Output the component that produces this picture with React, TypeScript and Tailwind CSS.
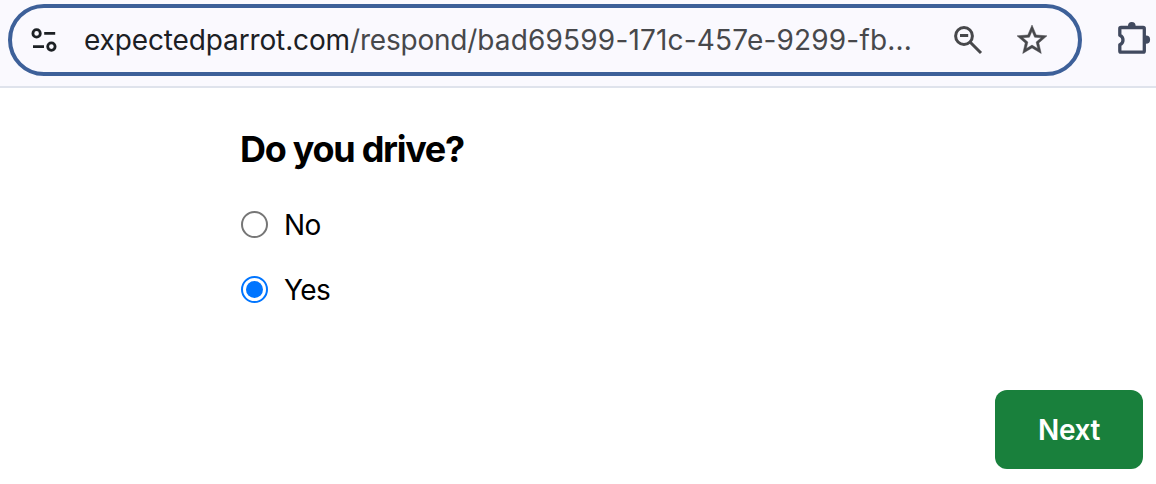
import { useState } from "react";

const options = ["No", "Yes"];

function TuneIcon() {
    return (
        <svg width="28" height="26" viewBox="0 0 28 26" fill="none" stroke="#1c2024" strokeWidth="2.8">
            <circle cx="6.6" cy="6.4" r="3.7" />
            <path d="M14.2 6.4H25.2M3 19.6H14" />
            <circle cx="21.4" cy="19.6" r="3.7" />
        </svg>
    );
}

function ZoomOutIcon() {
    return (
        <svg width="30" height="30" viewBox="0 0 30 30" fill="none" stroke="#47484b" strokeWidth="3">
            <circle cx="11" cy="11" r="8.4" />
            <path d="M17 17L28 28M7 10.6H15.2" />
        </svg>
    );
}

function StarIcon() {
    return (
        <svg width="36" height="36" viewBox="0 0 24 24" fill="#47484b" stroke="#47484b" strokeWidth="0.3">
            <path d="M22 9.24l-7.19-.62L12 2 9.19 8.63 2 9.24l5.46 4.73L5.82 21 12 17.27 18.18 21l-1.63-7.03L22 9.24zM12 15.4l-3.76 2.27 1-4.28-3.32-2.88 4.38-.38L12 6.1l1.71 4.04 4.38.38-3.32 2.88 1 4.28L12 15.4z" />
        </svg>
    );
}

function ExtensionIcon() {
    return (
        <svg width="36" height="36" viewBox="0 0 36 36" fill="none">
            <path
                d="M5 8.5H27.1Q28.3 8.5 28.3 9.7V32Q28.3 33.2 27.1 33.2H5Q3.8 33.2 3.8 32V25.8A5.2 5.2 0 0 0 3.8 16.2V9.7Q3.8 8.5 5 8.5Z"
                stroke="#414a5f"
                strokeWidth="3.3"
                strokeLinejoin="round"
            />
            <path d="M12 8V6.8a3.8 3.8 0 0 1 7.6 0V8ZM29 16.6h1a4.1 4.1 0 0 1 0 8.2H29Z" fill="#414a5f" />
        </svg>
    );
}

export default function App() {
    const [answer, setAnswer] = useState("Yes");

    return (
        <div className="h-[484px] w-[1156px] overflow-hidden bg-white font-['Inter',sans-serif] text-black">
            <header className="flex h-[88px] items-start border-b-2 border-[#dfe3ec] bg-[#faf9fe] pt-1 pl-2">
                <div className="flex h-[72px] w-[1074px] shrink-0 items-center rounded-full border-4 border-[#3d6099] pl-[18px]">
                    <TuneIcon />
                    <div className="ml-[26px] w-[860px] whitespace-nowrap text-[28px] leading-[34px] text-[#47484b]">
                        <span className="tracking-[-0.13px] text-[#1c2024]">expectedparrot.com</span>
                        <span className="tracking-[-0.2px]">/respond/</span>
                        <span className="tracking-[0.18px]">bad69599-171c-457e-9299-fb...</span>
                    </div>
                    <button className="ml-[9px]" aria-label="Zoom">
                        <ZoomOutIcon />
                    </button>
                    <button className="ml-[31px]" aria-label="Bookmark">
                        <StarIcon />
                    </button>
                </div>
                <button className="mt-[15px] ml-[34px] shrink-0" aria-label="Extensions">
                    <ExtensionIcon />
                </button>
            </header>

            <main className="pt-[39px] pr-[13px] pl-[240px]">
                <h1 className="text-[36px] leading-[44px] font-[650] tracking-[-1.28px]">Do you drive?</h1>
                <div className="mt-[33px] ml-px flex flex-col gap-[25px]">
                    {options.map((option) => (
                        <label key={option} className="flex h-10 items-center gap-4 text-[28px] leading-10 tracking-[-0.6px]">
                            <input
                                type="radio"
                                name="drive"
                                checked={answer === option}
                                onChange={() => setAnswer(option)}
                                className="flex size-[27px] appearance-none items-center justify-center rounded-full border-2 border-[#767676] before:size-[17px] before:rounded-full checked:border-[#0075ff] checked:before:bg-[#0075ff]"
                            />
                            <span className="pt-0.5">{option}</span>
                        </label>
                    ))}
                </div>
                <div className="mt-[81px] flex justify-end">
                    <button className="h-[79px] w-[148px] rounded-xl bg-[#19803c] text-[28px] font-semibold tracking-[-0.4px] text-white">
                        Next
                    </button>
                </div>
            </main>
        </div>
    );
}
